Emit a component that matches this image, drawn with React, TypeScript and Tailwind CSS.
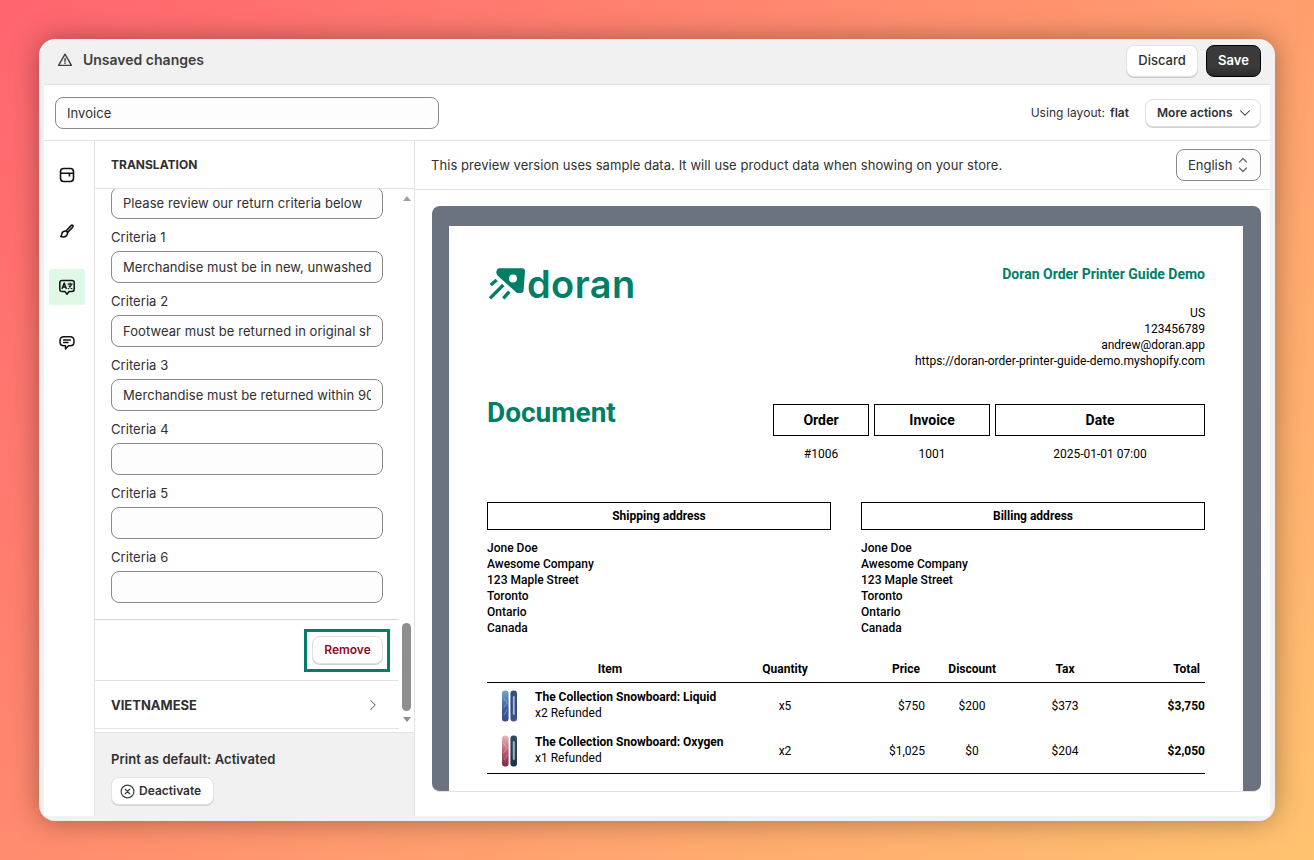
import { ChevronDown, ChevronRight } from "lucide-react";

const criteria = [
  { label: "Criteria 1", value: "Merchandise must be in new, unwashed, unworn condition" },
  { label: "Criteria 2", value: "Footwear must be returned in original shoe box" },
  { label: "Criteria 3", value: "Merchandise must be returned within 90 days" },
  { label: "Criteria 4", value: "" },
  { label: "Criteria 5", value: "" },
  { label: "Criteria 6", value: "" },
];

const address = ["Jone Doe", "Awesome Company", "123 Maple Street", "Toronto", "Ontario", "Canada"];

const items = [
  { id: "liquid", name: "The Collection Snowboard: Liquid", refund: "x2 Refunded", qty: "x5", price: "$750", discount: "$200", tax: "$373", total: "$3,750", a: ["#6fa8cf", "#3d5f9c", "#3a4a8c"], b: ["#3a4f86", "#2f4a80", "#45558f"] },
  { id: "oxygen", name: "The Collection Snowboard: Oxygen", refund: "x1 Refunded", qty: "x2", price: "$1,025", discount: "$0", tax: "$204", total: "$2,050", a: ["#eab9bd", "#b8566f", "#7c2a4c"], b: ["#2c4a5c", "#2b4054", "#20303f"] },
];

function Boards({ id, a, b }: { id: string; a: string[]; b: string[] }) {
  return (
    <svg width="18" height="32" viewBox="0 0 18 32">
      <defs>
        <linearGradient id={`${id}-a`} x1="0" y1="0" x2="0" y2="1">
          <stop offset="0" stopColor={a[0]} />
          <stop offset="0.55" stopColor={a[1]} />
          <stop offset="1" stopColor={a[2]} />
        </linearGradient>
        <linearGradient id={`${id}-b`} x1="0" y1="0" x2="0" y2="1">
          <stop offset="0" stopColor={b[0]} />
          <stop offset="0.55" stopColor={b[1]} />
          <stop offset="1" stopColor={b[2]} />
        </linearGradient>
      </defs>
      <rect x="1" y="0.5" width="6.6" height="31" rx="3" fill={`url(#${id}-a)`} />
      <path d="M2.5 8 L6 13 L2.5 18 M6 20 L3 25" stroke="#ffffff" strokeOpacity="0.3" strokeWidth="1" fill="none" />
      <rect x="9.4" y="0.5" width="6.6" height="31" rx="3" fill={`url(#${id}-b)`} />
      <rect x="11.8" y="6" width="2" height="19" rx="1" fill="#e6edf4" opacity="0.65" />
    </svg>
  );
}

function Logo() {
  return (
    <div className="ml-[2px] mt-[3px] flex h-[34px] items-center">
      <svg width="37" height="34" viewBox="0 0 37 34" className="shrink-0">
        <path d="M10 1.3 H33 Q36 1.3 36 4.3 L34.5 24 Q34 26.5 31 26 L28 26 L8.5 8.5 Q6.5 6 7.7 3.5 Q8.5 1.3 10 1.3 Z" fill="#007f66" />
        <circle cx="24" cy="11.5" r="4" fill="#fff" />
        <path d="M1.7 18 L7.7 13 M1 31.3 L14.3 18 M14.3 31.3 L20.3 24.7" stroke="#007f66" strokeWidth="3.4" fill="none" />
      </svg>
      <span className="ml-px text-[38px] leading-none font-semibold tracking-[0.4px] text-[#007f66] font-['Inter',sans-serif]">doran</span>
    </div>
  );
}

function Field({ value }: { value: string }) {
  return (
    <input
      readOnly
      value={value}
      className="h-[32px] w-full rounded-lg border border-[#8a8a8a] bg-[#fdfdfd] px-[11px] text-[13px] tracking-[0.06px] text-[#303030] outline-none"
    />
  );
}

export default function App() {
  return (
    <div className="h-[860px] w-full overflow-hidden p-[39px] bg-[linear-gradient(135deg,#ff646f_0%,#ff9a6e_55%,#ffc470_100%)] font-['Inter',sans-serif]">
      <div className="flex h-[782px] w-[1236px] flex-col overflow-hidden rounded-2xl bg-[#f1f1f1] px-[5px] pb-[5px] shadow-[0_0_28px_rgba(0,0,0,0.35)]">
        {/* save bar */}
        <div className="flex h-[45px] shrink-0 items-center justify-between pb-[2px] pl-[13px] pr-[9px]">
          <div className="-mt-[2px] flex items-center gap-[10px]">
            <svg width="16" height="16" viewBox="0 0 16 16" fill="none" stroke="#404040" strokeWidth="1.4" strokeLinejoin="round">
              <path d="M8 2.2 L14.4 13.4 L1.6 13.4 Z" />
              <path d="M8 6.4 V9.4 M8 11 V11.4" strokeLinecap="round" />
            </svg>
            <span className="text-sm font-semibold text-[#404040]">Unsaved changes</span>
          </div>
          <div className="flex items-center gap-2">
            <button className="h-[32px] w-[72px] rounded-lg border border-[#e3e3e3] bg-white text-[13px] font-medium text-[#303030] shadow-[0_1px_0_#c8c8c8]">Discard</button>
            <button className="h-[32px] w-[55px] rounded-lg border border-black bg-[linear-gradient(#3a3a3a_70%,#2a2a2a)] text-[13px] font-semibold text-white">Save</button>
          </div>
        </div>

        <div className="flex min-h-0 flex-1 flex-col border-t border-[#e3e3e3] bg-white">
          {/* title row */}
          <div className="flex h-[56px] shrink-0 items-center justify-between border-b border-[#e3e3e3] pl-[11px] pr-[9px]">
            <input
              readOnly
              value="Invoice"
              className="h-[32px] w-[384px] rounded-lg border border-[#8a8a8a] bg-[#fdfdfd] px-[11px] pt-[1px] text-[13px] tracking-[0.06px] text-[#303030] outline-none"
            />
            <div className="flex items-center">
              <span className="text-xs tracking-[0.06px] text-[#303030]">Using layout:</span>
              <span className="ml-[5px] text-xs font-semibold text-[#303030]">flat</span>
              <button className="ml-4 flex h-[28px] w-[116px] items-center justify-between rounded-lg border border-[#e0e0e0] bg-white pl-[11px] pr-[6px] text-xs font-semibold text-[#303030] shadow-[0_1px_0_#d0d0d0]">
                More actions
                <ChevronDown size={18} strokeWidth={1.4} />
              </button>
            </div>
          </div>

          <div className="flex min-h-0 flex-1">
            {/* icon rail */}
            <div className="flex w-[51px] shrink-0 flex-col items-center gap-[20px] border-r border-[#e3e3e3] pr-[4px] pt-[16px] text-[#111111]">
              <div className="flex h-9 w-9 items-center justify-center">
                <svg width="16" height="16" viewBox="0 0 16 16" fill="none" stroke="currentColor" strokeWidth="1.6">
                  <rect x="1.5" y="1.5" width="13" height="13" rx="3.2" />
                  <path d="M1.5 6.2 H14.5 M10.4 6.2 V9.5" />
                </svg>
              </div>
              <div className="flex h-9 w-9 items-center justify-center">
                <svg width="16" height="16" viewBox="0 0 16 16" fill="none" stroke="currentColor" strokeWidth="1.6" strokeLinejoin="round">
                  <path d="M7 8 L12 2.6 Q13 1.8 13.8 2.4 Q14.5 3.2 13.6 4.2 L8.6 9.4 Z" />
                  <path d="M7 8 Q3.8 7.8 3 10.2 Q2.8 12.4 1.8 13.6 Q5.6 14.6 7.6 12.6 Q8.8 11.2 8.6 9.4" />
                </svg>
              </div>
              <div className="flex h-9 w-9 items-center justify-center rounded-[3px] bg-[#e0f8e6]">
                <svg width="18" height="18" viewBox="0 0 18 18" fill="none" stroke="currentColor" strokeWidth="1.5" strokeLinejoin="round">
                  <path d="M4 2.5 H14 Q16.2 2.5 16.2 4.7 V11.3 Q16.2 13.5 14 13.5 H11 L9 16.2 L7 13.5 H4 Q1.8 13.5 1.8 11.3 V4.7 Q1.8 2.5 4 2.5 Z" />
                  <path d="M3.9 11 L6.2 5 L8.5 11 M4.8 9 H7.6" strokeWidth="1.4" />
                  <path d="M9.6 6.2 H14.6 M12.1 4.8 V6.2 M13.6 6.2 Q12.8 9.6 9.8 11 M10.8 7.6 Q11.8 9.8 14.4 11" strokeWidth="1.2" />
                </svg>
              </div>
              <div className="flex h-9 w-9 items-center justify-center">
                <svg width="16" height="16" viewBox="0 0 16 16" fill="none" stroke="currentColor" strokeWidth="1.5" strokeLinejoin="round">
                  <path d="M5 1.8 H11 Q15 1.8 15 5.8 V7 Q15 10.8 11 10.8 H9.5 L6.5 14 V10.8 H5 Q1 10.8 1 7 V5.8 Q1 1.8 5 1.8 Z" />
                  <path d="M4.6 5 H11.4 M4.6 7.6 H9" strokeLinecap="round" />
                </svg>
              </div>
            </div>

            {/* settings panel */}
            <div className="flex w-[320px] shrink-0 flex-col border-r border-[#e3e3e3]">
              <div className="flex h-[48px] shrink-0 items-center border-b border-[#e3e3e3] pl-[16px] pt-[1px] text-xs font-bold text-[#303030]">TRANSLATION</div>
              <div className="flex min-h-0 flex-1">
                <div className="min-w-0 flex-1 overflow-hidden">
                  <div className="border-b border-[#d4d4d4] pb-[16px] pl-[16px] pr-[16px]">
                    <div className="-mt-[2px]">
                      <Field value="Please review our return criteria below" />
                    </div>
                    {criteria.map((c) => (
                      <div key={c.label} className="mt-[4px]">
                        <div className="flex h-[28px] items-center pt-[2px] text-[13px] tracking-[0.06px] text-[#303030]">{c.label}</div>
                        <Field value={c.value} />
                      </div>
                    ))}
                  </div>
                  <div className="flex h-[61px] items-center justify-end border-b border-[#e3e3e3] pr-[9px]">
                    <div className="border-[3px] border-[#007f66] pb-[5px] pl-[5px] pr-[4px] pt-[4px]">
                      <button className="flex h-[28px] w-[71px] items-center justify-center rounded-lg border border-[#e0e0e0] bg-white text-xs font-semibold text-[#8e0b21] shadow-[0_1px_0_#d0d0d0]">Remove</button>
                    </div>
                  </div>
                  <div className="flex h-[48px] items-center justify-between border-b border-[#e3e3e3] pl-[16px] pr-[17px]">
                    <span className="pt-[2px] text-[13px] font-bold text-[#303030]">VIETNAMESE</span>
                    <ChevronRight size={18} strokeWidth={1.4} className="text-[#6b6b6b]" />
                  </div>
                </div>
                {/* scrollbar */}
                <div className="flex w-[15px] shrink-0 flex-col items-center">
                  <div className="mt-[7px] h-0 w-0 border-x-[4px] border-b-[5px] border-x-transparent border-b-[#a0a0a0]" />
                  <div className="mt-[422px] h-[88px] w-[9px] rounded-full bg-[#8e8e8e]" />
                  <div className="mt-[6px] h-0 w-0 border-x-[4px] border-t-[5px] border-x-transparent border-t-[#8e8e8e]" />
                </div>
              </div>
              <div className="h-[84px] shrink-0 border-t border-[#e3e3e3] bg-[#f1f1f1] pl-[16px] pt-[17px]">
                <div className="text-[13px] leading-[18px] font-semibold tracking-[0.07px] text-[#303030]">Print as default: Activated</div>
                <button className="mt-[9px] flex h-[28px] w-[103px] items-center gap-[4px] rounded-lg border border-[#e3e3e3] bg-white pl-[8px] text-xs font-semibold text-[#303030] shadow-[0_1px_0_#d0d0d0]">
                  <svg width="15" height="15" viewBox="0 0 16 16" fill="none" stroke="#404040" strokeWidth="1.3">
                    <circle cx="8" cy="8" r="6.8" />
                    <path d="M5.6 5.6 L10.4 10.4 M10.4 5.6 L5.6 10.4" strokeLinecap="round" />
                  </svg>
                  Deactivate
                </button>
              </div>
            </div>

            {/* preview */}
            <div className="flex min-w-0 flex-1 flex-col">
              <div className="flex h-[49px] shrink-0 items-center justify-between border-b border-[#e3e3e3] pl-[16px] pr-[9px]">
                <span className="pt-[2px] text-[13px] tracking-[0.06px] text-[#303030]">This preview version uses sample data. It will use product data when showing on your store.</span>
                <div className="flex h-[32px] w-[85px] items-center justify-between rounded-lg border border-[#8a8a8a] bg-[#fdfdfd] pl-[11px] pr-[12px] pt-[2px] text-[13px] text-[#303030]">
                  English
                  <svg width="10" height="16" viewBox="0 0 10 16" fill="none" stroke="#6b6b6b" strokeWidth="1.3" strokeLinecap="round" strokeLinejoin="round" className="-mt-[2px]">
                    <path d="M1.5 5 L5 1.5 L8.5 5 M1.5 11 L5 14.5 L8.5 11" />
                  </svg>
                </div>
              </div>
              <div className="min-h-0 flex-1 pb-[24px] pl-[17px] pr-[9px] pt-[16px]">
                <div className="h-full overflow-hidden rounded-lg border-b border-[#e3e3e3] bg-[#6b7280] pl-[17px] pr-[18px] pt-[20px]">
                  <div className="h-[640px] bg-white px-[38px] pt-[38px] font-['Roboto',sans-serif] text-xs text-black">
                    <div className="flex items-start justify-between">
                      <Logo />
                      <div className="text-right">
                        <div className="text-sm leading-[20px] font-bold text-[#007f66]">Doran Order Printer Guide Demo</div>
                        <div className="mt-[21px] leading-4">US</div>
                        <div className="leading-4">123456789</div>
                        <div className="leading-4">andrew@doran.app</div>
                        <div className="leading-4">https://doran-order-printer-guide-demo.myshopify.com</div>
                      </div>
                    </div>

                    <div className="mt-[35px] flex items-start justify-between">
                      <div className="-mt-[7px] text-[28px] leading-[32px] font-bold text-[#007f66]">Document</div>
                      <div className="grid w-[432px] grid-cols-[96px_116px_210px] gap-x-[5px] text-center">
                        <div className="flex h-[32px] items-center justify-center border border-black text-sm font-bold">Order</div>
                        <div className="flex h-[32px] items-center justify-center border border-black text-sm font-bold">Invoice</div>
                        <div className="flex h-[32px] items-center justify-center border border-black text-sm font-bold">Date</div>
                        <div className="mt-[10px] leading-4">#1006</div>
                        <div className="mt-[10px] leading-4">1001</div>
                        <div className="mt-[10px] leading-4">2025-01-01 07:00</div>
                      </div>
                    </div>

                    <div className="mt-[40px] grid grid-cols-[344px_344px] justify-between">
                      {["Shipping address", "Billing address"].map((title) => (
                        <div key={title}>
                          <div className="flex h-[28px] items-center justify-center border border-black font-bold">{title}</div>
                          <div className="mt-[10px] font-medium">
                            {address.map((line) => (
                              <div key={line} className="leading-4">{line}</div>
                            ))}
                          </div>
                        </div>
                      ))}
                    </div>

                    <div className="mt-[25px] grid grid-cols-[246px_104px_88px_71px_86px_123px] border-b border-black">
                      <div className="col-span-6 grid grid-cols-subgrid border-b border-black pb-[5px] leading-4 font-bold">
                        <div className="text-center">Item</div>
                        <div className="text-center">Quantity</div>
                        <div className="pr-[5px] text-right">Price</div>
                        <div className="text-right">Discount</div>
                        <div className="pl-[52px] text-center">Tax</div>
                        <div className="pr-[5px] text-right">Total</div>
                      </div>
                      {items.map((item) => (
                        <div key={item.name} className="col-span-6 grid h-[45px] grid-cols-subgrid items-center">
                          <div className="flex items-center">
                            <div className="flex w-[48px] justify-center pr-[2px]">
                              <Boards id={item.id} a={item.a} b={item.b} />
                            </div>
                            <div className="pb-[2px] leading-4">
                              <div className="font-bold whitespace-nowrap">{item.name}</div>
                              <div>{item.refund}</div>
                            </div>
                          </div>
                          <div className="text-center">{item.qty}</div>
                          <div className="text-right">{item.price}</div>
                          <div className="pl-[23px] text-center">{item.discount}</div>
                          <div className="pl-[52px] text-center">{item.tax}</div>
                          <div className="text-right font-bold">{item.total}</div>
                        </div>
                      ))}
                    </div>
                  </div>
                </div>
              </div>
            </div>
          </div>
        </div>
      </div>
    </div>
  );
}
